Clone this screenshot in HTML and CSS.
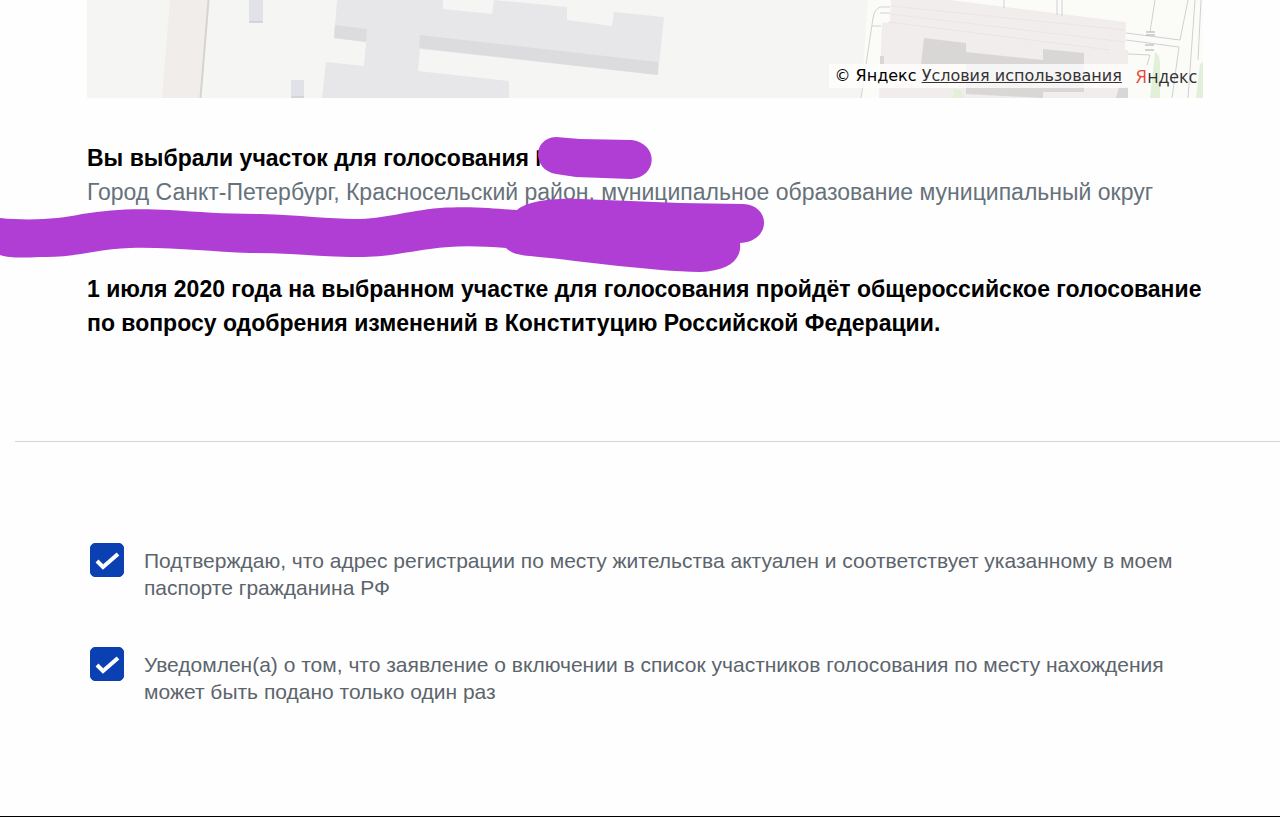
FILE: index.html
```html
<!DOCTYPE html>
<html lang="ru">
  <head>
    <meta charset="utf-8">
    <title>Участок для голосования</title>
    <link rel="stylesheet" href="styles.css">
  </head>
  <body>
    <div class="map">
      <svg class="map-canvas" viewBox="87 0 1116 98" preserveAspectRatio="xMaxYMax slice" aria-hidden="true">
        <rect x="87" width="1116" height="98" fill="#f5f5f3" />
        <!-- road on the left -->
        <path d="M170 0H208L200 98H162Z" fill="#f1edea" />
        <path d="M208.500 0L200.500 98" stroke="#d6d4d2" stroke-width="2" />
        <!-- small buildings -->
        <path d="M249 0H263V22H249ZM291 80H304V98H291Z" fill="#e1e1e8" />
        <path d="M249 21H263V23H249ZM291 96H304V98H291Z" fill="#d3d3da" />
        <!-- long building -->
        <path d="M337 0H443V9L492 14L494 0L567 7V20L612 26L614 12L664 17L658 75L420 49L418 71L509 81V98H322L326 62L364 66L366 42L334 38Z" fill="#e7e7ea" />
        <path d="M335 25L367 29L366 42L334 38ZM420 35L658 62V75L419 48Z" fill="#dcdcdf" />
        <!-- block on the right -->
        <path d="M868 0H1203V98H861Z" fill="#fbfcf8" />
        <path d="M891 0H950L1126 22L1125 50H1128V98H879L882 23L890 22Z" fill="#f1edec" />
        <path d="M891 6L1125 30M890 14L1125 42M888 22L1110 50" stroke="#e9e5e4" fill="none" />
        <path d="M924 38L966 43V52L1043 60V49L1084 53V92L1043 92V98L966 94V64H921ZM880 56H884V64H880ZM1119 87H1128V98H1116Z" fill="#d9d7d6" />
        <g fill="none" stroke="#cfd0d5">
          <path d="M890 7H880Q874 10 873 18L861 98M890 13H880M872 26H881" />
          <path d="M1004 0V8M1057 0V15M1062 0V16M1155 0L1150 32M1126 33L1180 40L1188 0M1126 40L1179 47L1172 98M1128 54L1150 55L1147 65M1195 0L1188 98M1201 0L1198 60" />
          <path d="M1146 32H1155M1146 35H1155M1145 45H1154M1145 50H1154" stroke="#aaaab4" />
        </g>
        <path d="M1155 52Q1161 55 1160 70V98H1150ZM1200 64L1203 62V98H1196ZM954 88L960 90L964 98H953Z" fill="#e2f0d9" />
      </svg>
      <div class="map-copyrights">
        <p class="map-terms">© Яндекс <a href="#">Условия использования</a></p>
        <a class="map-logo" href="#"><span class="map-logo-first">Я</span>ндекс</a>
      </div>
    </div>

    <section class="station">
      <h2 class="station-title">Вы выбрали участок для голосования №</h2>
      <p class="station-address">Город Санкт-Петербург, Красносельский район, муниципальное образование муниципальный округ</p>
      <p class="station-info">1 июля 2020 года на выбранном участке для голосования пройдёт общероссийское голосование по вопросу одобрения изменений в Конституцию Российской Федерации.</p>
      <!-- marker strokes over the private data -->
      <svg class="marker" width="800" height="180" viewBox="0 98 800 180" aria-hidden="true">
        <path d="M556 137C532 138 532 170 556 174L576 177L631 179C658 177 659 144 632 140L580 139Z" />
        <path d="M0 218C30 221 60 219 82 214C110 210 130 208 170 210C200 212 225 214 260 214C300 215 330 219 355 219C385 219 405 211 440 208C475 206 495 209 517 210C528 202 545 198 580 199L680 203L743 204C771 205 772 241 740 243C742 260 728 271 700 272C650 271 590 262 530 256C518 255 511 253 506 248C480 246 455 245 430 249C405 252 385 258 350 257C315 256 285 253 250 253C210 252 175 247 130 248C95 249 75 258 40 257C20 258 10 258 0 255Z" />
      </svg>
    </section>

    <form class="consents">
      <label class="consent">
        <input class="consent-input" type="checkbox" checked>
        <span class="consent-text">Подтверждаю, что адрес регистрации по месту жительства актуален и соответствует указанному в моем паспорте гражданина РФ</span>
      </label>
      <label class="consent">
        <input class="consent-input" type="checkbox" checked>
        <span class="consent-text">Уведомлен(а) о том, что заявление о включении в список участников голосования по месту нахождения может быть подано только один раз</span>
      </label>
    </form>
  </body>
</html>
```
FILE: styles.css
```css
* {
  box-sizing: border-box;
}
body {
  display: flex;
  flex-direction: column;
  min-height: 100vh;
  margin: 0;
  border-bottom: 1px solid #000;
  background: #fefefe;
  color: #000;
  font-family: "Liberation Sans", Arial, sans-serif;
}
h2,
p {
  margin: 0;
}

.map {
  position: relative;
  height: 98px;
  margin: 0 77px 0 87px;
  overflow: hidden;
}
.map-canvas {
  display: block;
  width: 100%;
  height: 100%;
}
.map-copyrights {
  position: absolute;
  right: 6px;
  bottom: 8px;
  display: flex;
  align-items: center;
  gap: 8px;
}
.map-terms {
  padding: 0 6px;
  background: rgba(255, 255, 255, 0.75);
  font: 16px/24px "DejaVu Sans", Verdana, sans-serif;
}
.map-terms a {
  color: #333;
}
.map-logo {
  color: #333;
  font: 18px/28px "Open Sans", sans-serif;
  text-decoration: none;
}
.map-logo-first {
  color: #e8453c;
}

.station {
  position: relative;
  padding: 43px 77px 101px 87px;
  font-size: 23px;
  line-height: 34px;
}
.station-title {
  font-size: inherit;
}
.station-address {
  min-height: 68px;
  margin-bottom: 29px;
  color: #66717a;
}
.station-info {
  font-weight: bold;
}
.marker {
  position: absolute;
  top: 0;
  left: 0;
  fill: #b03dd4;
}

.consents {
  display: flex;
  flex-direction: column;
  gap: 46px;
  margin-left: 15px;
  padding: 101px 77px 98px 75px;
  border-top: 1px solid #d4d4d4;
}
.consent {
  display: flex;
  align-items: flex-start;
  gap: 20px;
}
.consent-input {
  flex: none;
  width: 34px;
  height: 34px;
  margin: 0;
  appearance: none;
  border: 1px solid #0d3fae;
  border-radius: 5px;
}
.consent-input:checked {
  background: #0b40b3 url("data:image/svg+xml,%3Csvg xmlns='http://www.w3.org/2000/svg' viewBox='0 0 34 34'%3E%3Cpath d='M7 18l6 6L28 11' fill='none' stroke='white' stroke-width='4'/%3E%3C/svg%3E") center / 34px 34px;
}
.consent-text {
  padding-top: 4px;
  color: #5c646c;
  font-size: 21px;
  line-height: 27px;
}
```
